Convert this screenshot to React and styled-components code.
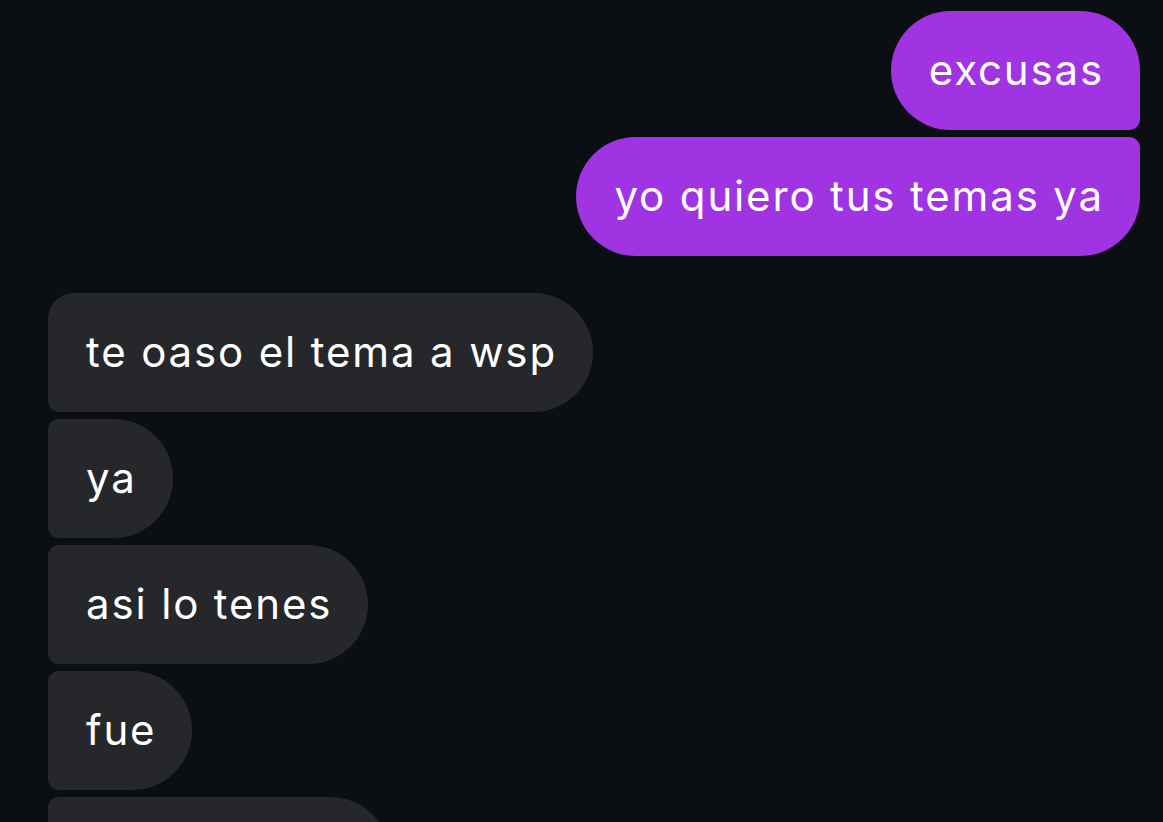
import styled, { createGlobalStyle } from 'styled-components';

const GlobalStyle = createGlobalStyle`
  html, body {
    margin: 0;
    padding: 0;
    background: #0b0f13;
    height: 100%;
    overflow: hidden;
  }
  body {
    font-family: Inter, "Noto Sans", sans-serif;
  }
`;

const Thread = styled.div`
  display: flex;
  flex-direction: column;
  padding: 11px 23px 0 48px;
  height: 822px;
  box-sizing: border-box;
`;

const Group = styled.div`
  display: flex;
  flex-direction: column;
  align-items: ${({ $sent }) => ($sent ? 'flex-end' : 'flex-start')};
  gap: 7px;
  margin-top: ${({ $sent }) => ($sent ? '0' : '37px')};
`;

const BIG = '60px';
const SMALL = '11px';

const corners = {
  sentFirst: `${BIG} ${BIG} ${SMALL} ${BIG}`,
  sentLast: `${BIG} ${SMALL} ${BIG} ${BIG}`,
  recvFirst: `26px ${BIG} ${BIG} ${SMALL}`,
  recvMid: `${SMALL} ${BIG} ${BIG} ${SMALL}`,
};

const Bubble = styled.div`
  display: flex;
  align-items: center;
  box-sizing: border-box;
  height: 119px;
  padding: 0 36px 2px 38px;
  border-radius: ${({ $shape }) => corners[$shape]};
  background: ${({ $sent }) => ($sent ? '#a033e2' : '#25272b')};
  color: #ffffff;
  font-size: 42px;
  letter-spacing: 1.85px;
  white-space: nowrap;
  flex-shrink: 0;
`;

const Placeholder = styled.span`
  display: inline-block;
  width: 268px;
`;

const sent = ['excusas', 'yo quiero tus temas ya'];
const received = ['te oaso el tema a wsp', 'ya', 'asi lo tenes', 'fue'];

export default function App() {
  return (
    <>
      <GlobalStyle />
      <Thread>
        <Group $sent>
          {sent.map((t, i) => (
            <Bubble key={t} $sent $shape={i === 0 ? 'sentFirst' : 'sentLast'}>
              {t}
            </Bubble>
          ))}
        </Group>
        <Group>
          {received.map((t, i) => (
            <Bubble key={t} $shape={i === 0 ? 'recvFirst' : 'recvMid'}>
              {t}
            </Bubble>
          ))}
          <Bubble $shape="recvMid">
            <Placeholder />
          </Bubble>
        </Group>
      </Thread>
    </>
  );
}
